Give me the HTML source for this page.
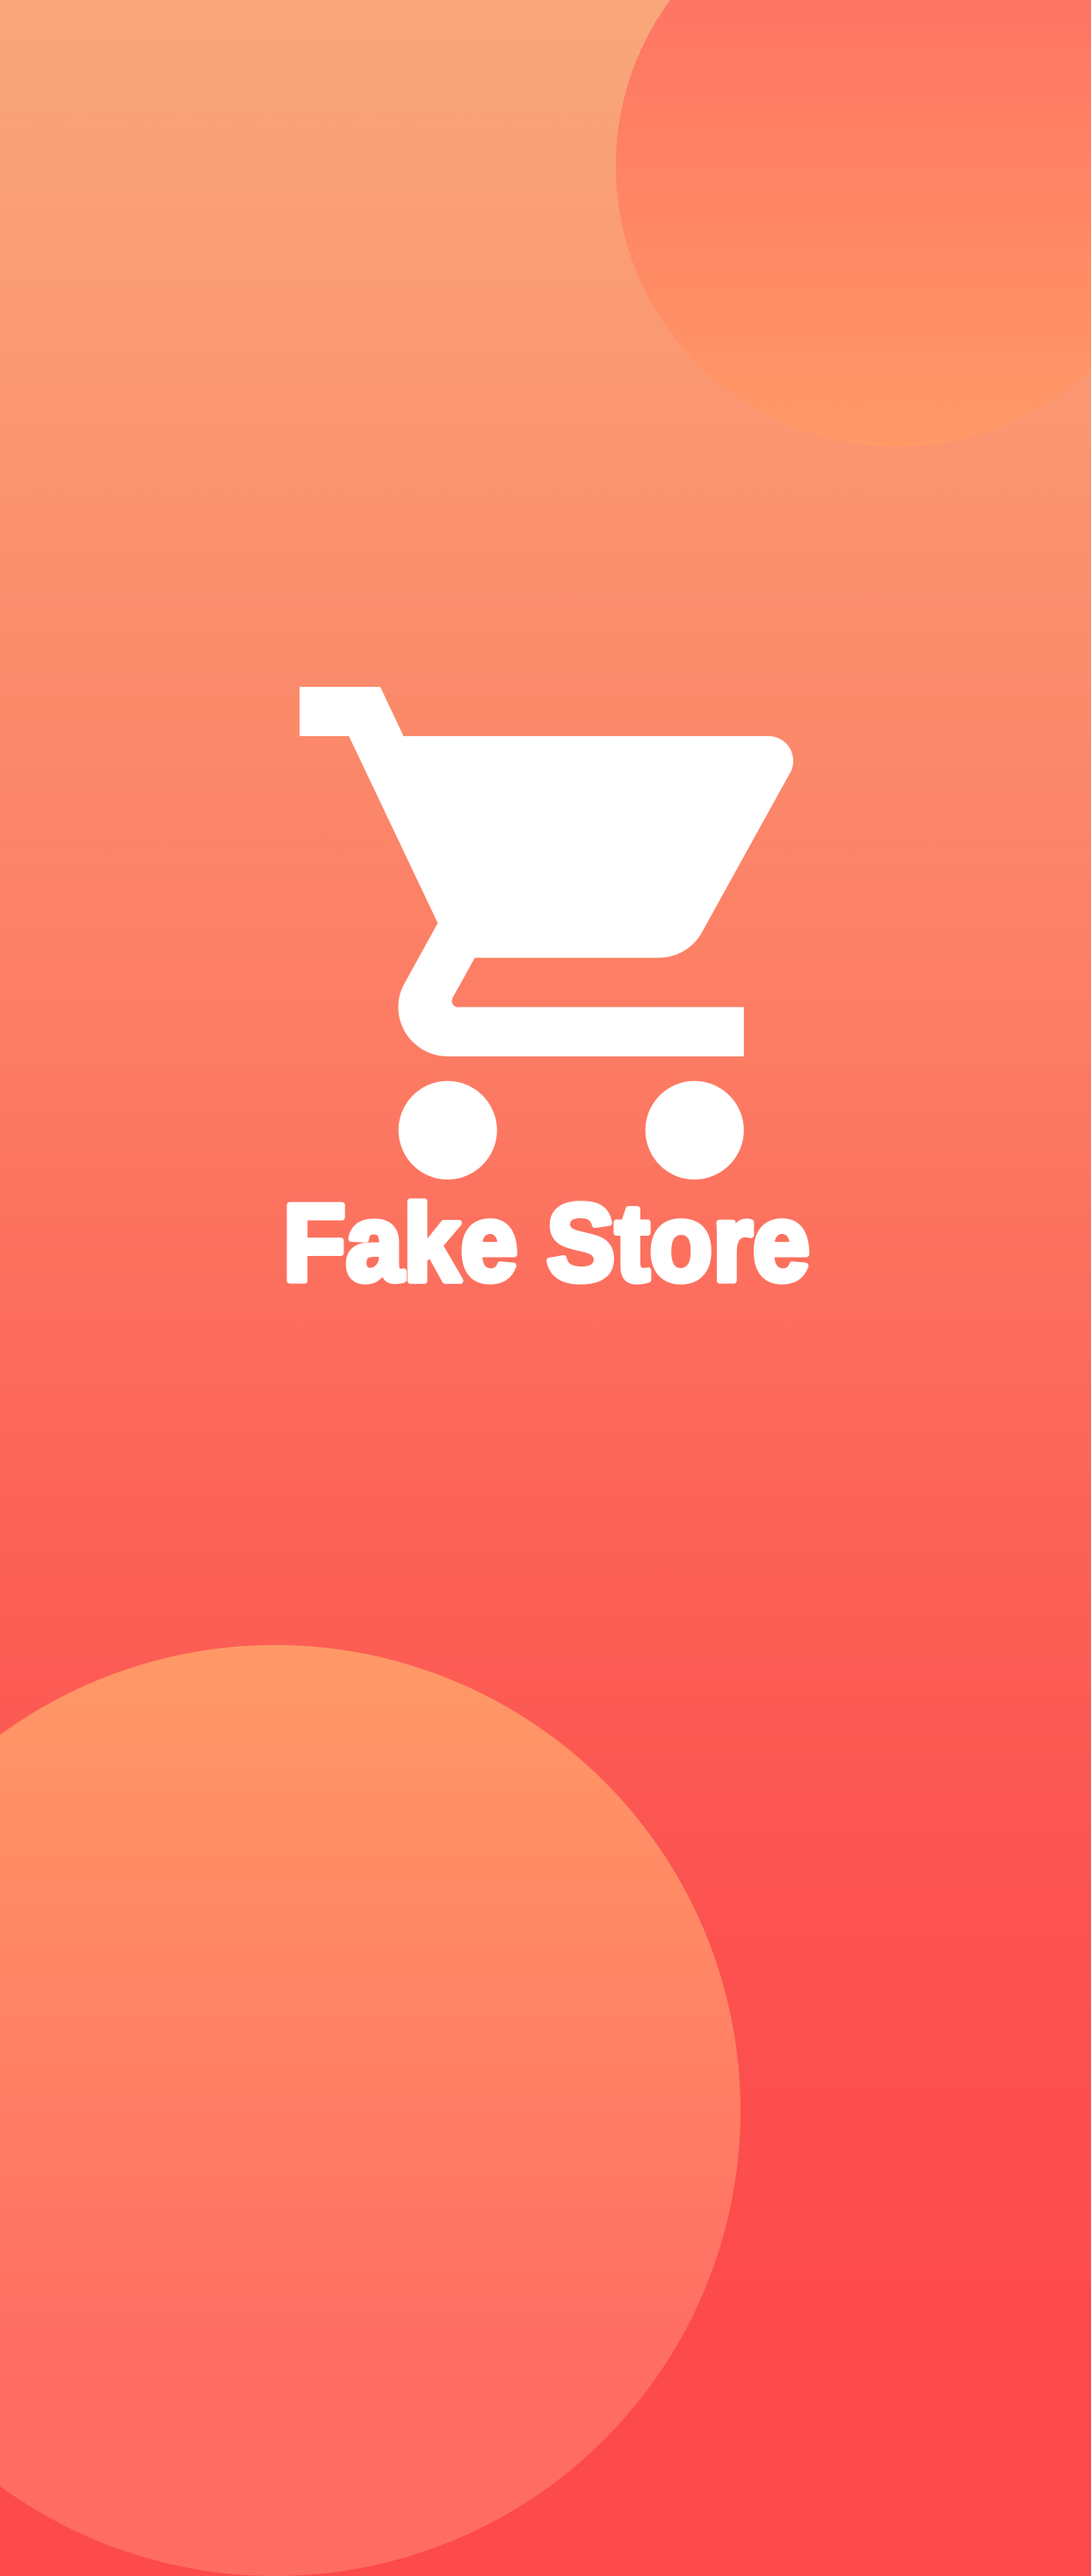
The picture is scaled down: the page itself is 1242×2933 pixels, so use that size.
<!DOCTYPE html>
<html><head><meta charset="utf-8"><style>
html{margin:0;padding:0;min-height:2688px;background-color:#fd4a4a;background-image:linear-gradient(180deg,#f9a77a 0%,#fb8a6b 30%,#fc7b63 45%,#fc6559 62%,#fc5350 80%,#fd4a4a 100%);background-size:1242px 2688px;background-repeat:no-repeat}
body{margin:0;padding:0;width:1242px;height:2688px;overflow:hidden;position:relative}
.c1{position:absolute;left:701px;top:-131px;width:640px;height:640px;border-radius:50%;background:linear-gradient(180deg,#ff6c63 0%,#ff9966 100%)}
.c2{position:absolute;left:-217px;top:1873px;width:1060px;height:1060px;border-radius:50%;background:linear-gradient(180deg,#ff9966 0%,#ff6c63 80%)}
svg{position:absolute}
</style></head><body>
<div class="c1"></div>
<div class="c2"></div>
<svg style="left:341px;top:782px" width="562" height="561" viewBox="1 2 20 20" preserveAspectRatio="none">
<path fill="#fff" d="M7 18c-1.1 0-1.99.9-1.99 2S5.9 22 7 22s2-.9 2-2-.9-2-2-2zM1 2v2h2l3.6 7.59-1.35 2.45c-.16.28-.25.61-.25.96 0 1.1.9 2 2 2h12v-2H7.42c-.14 0-.25-.11-.25-.25l.03-.12.9-1.63h7.45c.75 0 1.41-.41 1.750-1.03l3.58-6.49c.08-.14.12-.31.12-.48 0-.55-.45-1-1-1H5.21l-.94-2H1zm16 16c-1.1 0-1.99.9-1.99 2s.89 2 1.99 2 2-.9 2-2-.9-2-2-2z"/>
</svg>
<svg style="left:0;top:1340px" width="1242" height="140">
<text x="322" y="118" textLength="600" lengthAdjust="spacingAndGlyphs" font-family="Liberation Sans, sans-serif" font-weight="bold" font-size="124" fill="#fff" stroke="#fff" stroke-width="7" stroke-linejoin="round">Fake Store</text>
</svg>
</body></html>
